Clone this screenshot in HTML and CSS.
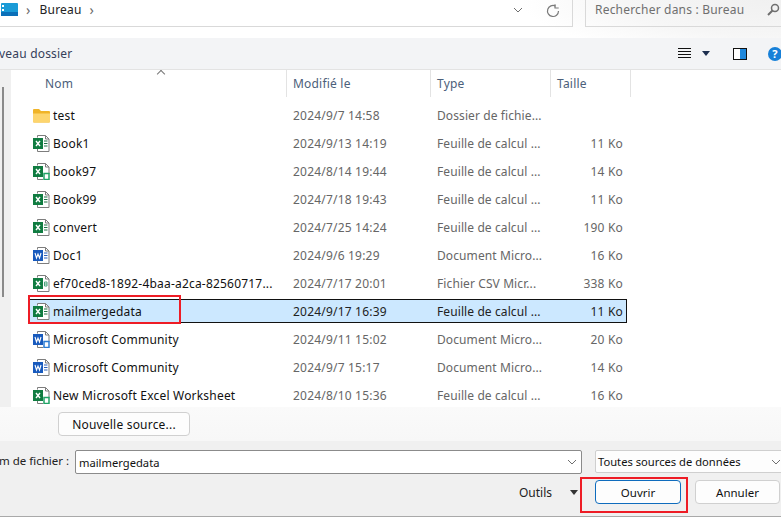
FILE: index.html
```html
<!DOCTYPE html>
<html lang="fr">
<head>
<meta charset="utf-8">
<title>Ouvrir</title>
<link rel="stylesheet" href="styles.css">
</head>
<body>
<svg class="defs" width="0" height="0" aria-hidden="true">
  <symbol id="page" viewBox="0 0 17 17">
    <path d="M4.5 2.5V.5h8l3.5 3.5v12.5H4.5V14" fill="#fff" stroke="#7d7d7d"/>
    <path d="M12.5.5V4H16" fill="none" stroke="#7d7d7d"/>
  </symbol>
  <symbol id="xl" viewBox="0 0 17 17">
    <use href="#page"/>
    <path d="M11 6h3.500M11 8.500h3.500M11 11h3.500" stroke="#1e7145"/>
    <rect x="0" y="3" width="10" height="11" fill="#107c41"/>
    <path d="M3 6l4 5M7 6l-4 5" stroke="#fff" stroke-width="1.400"/>
  </symbol>
  <symbol id="xls" viewBox="0 0 17 17">
    <path d="M4.500 2.500V.5h8l3.500 3.500v7M4.500 14v2.500H10" fill="#fff" stroke="#7d7d7d"/>
    <path d="M12.500.5V4H16" fill="none" stroke="#7d7d7d"/>
    <rect x="0" y="3" width="10" height="11" fill="#107c41"/>
    <path d="M3 6l4 5M7 6l-4 5" stroke="#fff" stroke-width="1.400"/>
    <rect x="11" y="10.500" width="5" height="6" fill="#fff" stroke="#21a366" stroke-width="1.500"/>
  </symbol>
  <symbol id="csv" viewBox="0 0 17 17">
    <use href="#page"/>
    <rect x="0" y="3" width="10" height="11" fill="#107c41"/>
    <path d="M3 6l4 5M7 6l-4 5" stroke="#fff" stroke-width="1.400"/>
    <path d="M11.500 7h2.500v4h-2.500zM11.500 9h2.500" fill="none" stroke="#4aa37c"/>
  </symbol>
  <symbol id="wd" viewBox="0 0 17 17">
    <use href="#page"/>
    <path d="M11 6h3.500M11 8.500h3.500M11 11h3.500" stroke="#2b5fb8"/>
    <rect x="0" y="3" width="10" height="11" fill="#185abd"/>
    <path d="M2 6l1.500 5L5 7l1.500 4L8 6" fill="none" stroke="#fff" stroke-width="1.100"/>
  </symbol>
  <symbol id="wds" viewBox="0 0 17 17">
    <path d="M4.500 2.500V.5h8l3.500 3.500v7M4.500 14v2.500H10" fill="#fff" stroke="#7d7d7d"/>
    <path d="M12.500.5V4H16" fill="none" stroke="#7d7d7d"/>
    <rect x="0" y="3" width="10" height="11" fill="#185abd"/>
    <path d="M2 6l1.500 5L5 7l1.500 4L8 6" fill="none" stroke="#fff" stroke-width="1.100"/>
    <rect x="11" y="10.500" width="5" height="6" fill="#fff" stroke="#2b7cd3" stroke-width="1.500"/>
  </symbol>
  <symbol id="folder" viewBox="0 0 17 17">
    <path d="M0 3a1 1 0 0 1 1-1h5l2 2h8a1 1 0 0 1 1 1v9.500a1 1 0 0 1-1 1H1a1 1 0 0 1-1-1z" fill="#f0b429"/>
    <path d="M0 6.500h17v8a1 1 0 0 1-1 1H1a1 1 0 0 1-1-1z" fill="#fdd56e"/>
  </symbol>
  <symbol id="chev" viewBox="0 0 10 6">
    <path d="M1 1l4 4 4-4" fill="none" stroke="#6f6f6f"/>
  </symbol>
</svg>

<div class="dialog">
  <header class="addressbar">
    <div class="crumbs">
      <svg class="pc" width="17" height="13" viewBox="0 0 17 13"><rect width="17" height="13" rx="1" fill="#1a9bd7"/><rect y="9" width="17" height="4" fill="#0b6fb8"/><rect x="1" y="2" width="2" height="2" fill="#fff"/><rect x="1" y="6" width="2" height="2" fill="#fff"/></svg>
      <span class="sep">›</span>
      <span class="crumb">Bureau</span>
      <span class="sep">›</span>
      <svg class="addr-chev" width="10" height="6"><use href="#chev"/></svg>
      <svg class="refresh" width="14" height="14" viewBox="0 0 14 14"><path d="M12.500 7A5.500 5.500 0 1 1 9.500 2.100" fill="none" stroke="#7a7a7a" stroke-width="1.200"/><path d="M9 .3v3.700h3.700" fill="none" stroke="#7a7a7a" stroke-width="1.200"/></svg>
    </div>
    <div class="search">
      <span>Rechercher dans : Bureau</span>
      <svg width="13" height="13" viewBox="0 0 13 13"><circle cx="8" cy="5" r="3.500" fill="none" stroke="#6e6e6e" stroke-width="1.500"/><path d="M5.500 7.500L1 12" stroke="#6e6e6e" stroke-width="2"/></svg>
    </div>
  </header>

  <div class="toolbar">
    <span class="tool-label">veau dossier</span>
    <div class="tool-icons">
      <svg width="13" height="11" viewBox="0 0 13 11"><path d="M0 .5h13M0 3.500h13M0 6.500h13M0 9.500h13" stroke="#111"/></svg>
      <span class="caret navy"></span>
      <svg class="preview" width="14" height="12" viewBox="0 0 14 12"><rect x=".5" y=".5" width="13" height="11" fill="#fff" stroke="#111"/><rect x="7" y="1" width="6" height="10" fill="#1e88dd"/></svg>
      <span class="help">?</span>
    </div>
  </div>

  <div class="browser">
    <aside class="sidebar"><div class="thumb"></div></aside>
    <div class="list">
      <div class="head">
        <span class="sort"></span>
        <div class="hcell c-name">Nom</div>
        <div class="hcell c-date">Modifié le</div>
        <div class="hcell c-type">Type</div>
        <div class="hcell c-size">Taille</div>
      </div>
      <div class="rows">
        <div class="row"><svg class="ico"><use href="#folder"/></svg><span class="name">test</span><span class="date">2024/9/7 14:58</span><span class="type">Dossier de fichie...</span><span class="size"></span></div>
        <div class="row"><svg class="ico"><use href="#xl"/></svg><span class="name">Book1</span><span class="date">2024/9/13 14:19</span><span class="type">Feuille de calcul ...</span><span class="size">11 Ko</span></div>
        <div class="row"><svg class="ico"><use href="#xls"/></svg><span class="name">book97</span><span class="date">2024/8/14 19:44</span><span class="type">Feuille de calcul ...</span><span class="size">14 Ko</span></div>
        <div class="row"><svg class="ico"><use href="#xl"/></svg><span class="name">Book99</span><span class="date">2024/7/18 19:43</span><span class="type">Feuille de calcul ...</span><span class="size">11 Ko</span></div>
        <div class="row"><svg class="ico"><use href="#xl"/></svg><span class="name">convert</span><span class="date">2024/7/25 14:24</span><span class="type">Feuille de calcul ...</span><span class="size">190 Ko</span></div>
        <div class="row"><svg class="ico"><use href="#wd"/></svg><span class="name">Doc1</span><span class="date">2024/9/6 19:29</span><span class="type">Document Micro...</span><span class="size">16 Ko</span></div>
        <div class="row"><svg class="ico"><use href="#csv"/></svg><span class="name">ef70ced8-1892-4baa-a2ca-82560717...</span><span class="date">2024/7/17 20:01</span><span class="type">Fichier CSV Micr...</span><span class="size">338 Ko</span></div>
        <div class="row selected"><svg class="ico"><use href="#xl"/></svg><span class="name">mailmergedata</span><span class="date">2024/9/17 16:39</span><span class="type">Feuille de calcul ...</span><span class="size">11 Ko</span></div>
        <div class="row"><svg class="ico"><use href="#wds"/></svg><span class="name">Microsoft Community</span><span class="date">2024/9/11 15:02</span><span class="type">Document Micro...</span><span class="size">20 Ko</span></div>
        <div class="row"><svg class="ico"><use href="#wd"/></svg><span class="name">Microsoft Community</span><span class="date">2024/9/7 15:17</span><span class="type">Document Micro...</span><span class="size">14 Ko</span></div>
        <div class="row"><svg class="ico"><use href="#xls"/></svg><span class="name">New Microsoft Excel Worksheet</span><span class="date">2024/8/10 15:36</span><span class="type">Feuille de calcul ...</span><span class="size">16 Ko</span></div>
      </div>
    </div>
  </div>

  <div class="source-bar"><button class="btn source">Nouvelle source...</button></div>

  <footer class="footer">
    <div class="file-line">
      <span class="file-label">m de fichier :</span>
      <div class="file-input"><span>mailmergedata</span><svg width="10" height="6"><use href="#chev"/></svg></div>
      <div class="file-filter"><span>Toutes sources de données</span><svg width="10" height="6"><use href="#chev"/></svg></div>
    </div>
    <div class="action-line">
      <span class="tools">Outils</span>
      <span class="caret dark"></span>
      <button class="btn primary">Ouvrir</button>
      <button class="btn cancel">Annuler</button>
    </div>
  </footer>

  <div class="mark mark-row"></div>
  <div class="mark mark-open"></div>
</div>
</body>
</html>
```
FILE: styles.css
```css
* { box-sizing: border-box; }
html, body { margin: 0; padding: 0; }
body {
  width: 781px;
  height: 518px;
  overflow: hidden;
  background: #fff;
  font-family: "Noto Sans", "Open Sans", sans-serif;
  font-size: 12px;
  letter-spacing: 0.2px;
  color: #1a1a1a;
}
.defs { position: absolute; }
.dialog {
  position: relative;
  width: 781px;
  height: 518px;
  display: flex;
  flex-direction: column;
  overflow: hidden;
}

/* address bar */
.addressbar {
  height: 38px;
  flex: none;
  display: flex;
  align-items: flex-start;
  background: radial-gradient(ellipse 260px 60px at 100% 0, #f0f0f0 0, #f6f6f6 60%, #fff 100%);
}
.crumbs {
  width: 573px;
  height: 27px;
  flex: none;
  display: flex;
  align-items: center;
  padding: 0 12px 7px 1px;
  border-right: 1px solid #d9d9d9;
  border-bottom: 1px solid #d9d9d9;
}
.pc { flex: none; }
.sep { color: #6a6a6a; font-size: 14px; margin-left: 8px; line-height: 1; }
.crumb { margin-left: 9px; color: #222; }
.crumbs .sep + .crumb + .sep { margin-left: 8px; }
.addr-chev { margin-left: auto; margin-right: 23px; }
.refresh { margin-top: 2px; }
.search {
  width: 196px;
  height: 27px;
  margin-left: 12px;
  flex: none;
  display: flex;
  align-items: center;
  justify-content: space-between;
  padding: 0 0 7px 9px;
  border-left: 1px solid #d9d9d9;
  border-bottom: 1px solid #d9d9d9;
  color: #6f6f6f;
}
.search svg { margin-right: 1px; }

/* toolbar */
.toolbar {
  height: 32px;
  flex: none;
  display: flex;
  align-items: center;
  justify-content: space-between;
  background: #f3f4f6;
  border-bottom: 1px solid #e3e3e3;
}
.tool-label { color: #35405a; margin-left: -1px; }
.tool-icons { display: flex; align-items: center; margin-right: -1px; }
.caret {
  width: 0;
  height: 0;
  border-left: 4px solid transparent;
  border-right: 4px solid transparent;
  border-top: 5px solid #1d2f4f;
}
.caret.navy { margin-left: 11px; }
.caret.dark { border-top-color: #333; margin-left: 18px; }
.preview { margin-left: 23px; }
.help {
  width: 14px;
  height: 14px;
  margin-left: 21px;
  border-radius: 50%;
  background: #1780d8;
  color: #fff;
  font-size: 11px;
  font-weight: 700;
  line-height: 14px;
  text-align: center;
}

/* browser */
.browser { height: 337px; flex: none; display: flex; }
.sidebar {
  width: 11px;
  flex: none;
  background: #f0f0f0;
  padding: 17px 0 0 2px;
}
.thumb { width: 2px; height: 210px; background: #8a8a8a; }
.list { flex: 1; min-width: 0; background: #fff; overflow: hidden; }
.head { position: relative; height: 27px; display: flex; }
.sort {
  position: absolute;
  left: 147px;
  top: 1px;
  width: 6px;
  height: 6px;
  border-left: 1px solid #777;
  border-top: 1px solid #777;
  transform: rotate(45deg);
}
.hcell {
  height: 27px;
  padding: 5px 0 0 6px;
  border-right: 1px solid #e3e3e3;
  color: #4c607a;
}
.hcell.c-name { width: 276px; padding-left: 34px; }
.hcell.c-date { width: 144px; }
.hcell.c-type { width: 120px; }
.hcell.c-size { width: 80px; }
.rows { display: flex; flex-direction: column; gap: 4px; padding-top: 6px; }
.row {
  height: 24px;
  flex: none;
  display: flex;
  align-items: center;
  margin-left: 18px;
  width: 598px;
  border: 1px solid transparent;
  color: #666;
}
.ico { width: 17px; height: 17px; margin-left: 3px; flex: none; }
.name { width: 240px; margin-left: 3px; color: #111; flex: none; white-space: nowrap; }
.date { width: 144px; flex: none; white-space: nowrap; }
.type { width: 120px; flex: none; white-space: nowrap; letter-spacing: 0.1px; }
.size { width: 66px; text-align: right; flex: none; }
.row.selected { background: #cce8ff; border-color: #111; color: #222; }

/* source bar */
.source-bar {
  height: 34px;
  flex: none;
  padding: 5px 0 0 58px;
  background: linear-gradient(#fafafa, #f7f7f7);
}
.btn {
  font: inherit;
  letter-spacing: inherit;
  color: #111;
  background: #fdfdfd;
  border: 1px solid #d0d0d0;
  border-radius: 4px;
  padding: 0;
  height: 24px;
}
.btn.source { width: 132px; }

/* footer */
.footer {
  height: 76px;
  flex: none;
  background: #f0f0f0;
  border-bottom: 1px solid #a9a9a9;
  padding-top: 9px;
  font-size: 11.500px;
  letter-spacing: 0;
}
.file-line { display: flex; align-items: flex-start; }
.file-label { width: 75px; flex: none; margin-left: -1px; padding-top: 3px; color: #222; white-space: nowrap; }
.file-input {
  width: 507px;
  height: 24px;
  flex: none;
  margin-left: 1px;
  display: flex;
  align-items: center;
  justify-content: space-between;
  padding: 0 4px 0 3px;
  background: #fff;
  border: 1px solid #8b8b8b;
  border-radius: 2px;
  color: #111;
  font-size: 11.200px;
}
.file-filter {
  width: 190px;
  height: 23px;
  flex: none;
  margin-left: 13px;
  display: flex;
  align-items: center;
  justify-content: space-between;
  padding: 0 3px 0 2px;
  background: #fdfdfd;
  border: 1px solid #cfcfcf;
  border-radius: 2px;
  color: #111;
  font-size: 11.200px;
}
.action-line { display: flex; align-items: center; margin-top: 6px; padding-left: 519px; }
.tools { width: 33px; color: #222; font-size: 12px; }
.btn.primary { width: 86px; margin-left: 17px; border: 1px solid #0f6cbd; }
.btn.cancel { width: 85px; margin-left: 14px; }

/* red annotations */
.mark { position: absolute; border: 2px solid #ee1c25; pointer-events: none; }
.mark-row { left: 28px; top: 295px; width: 153px; height: 29px; }
.mark-open { left: 580px; top: 477px; width: 108px; height: 36px; }
```
